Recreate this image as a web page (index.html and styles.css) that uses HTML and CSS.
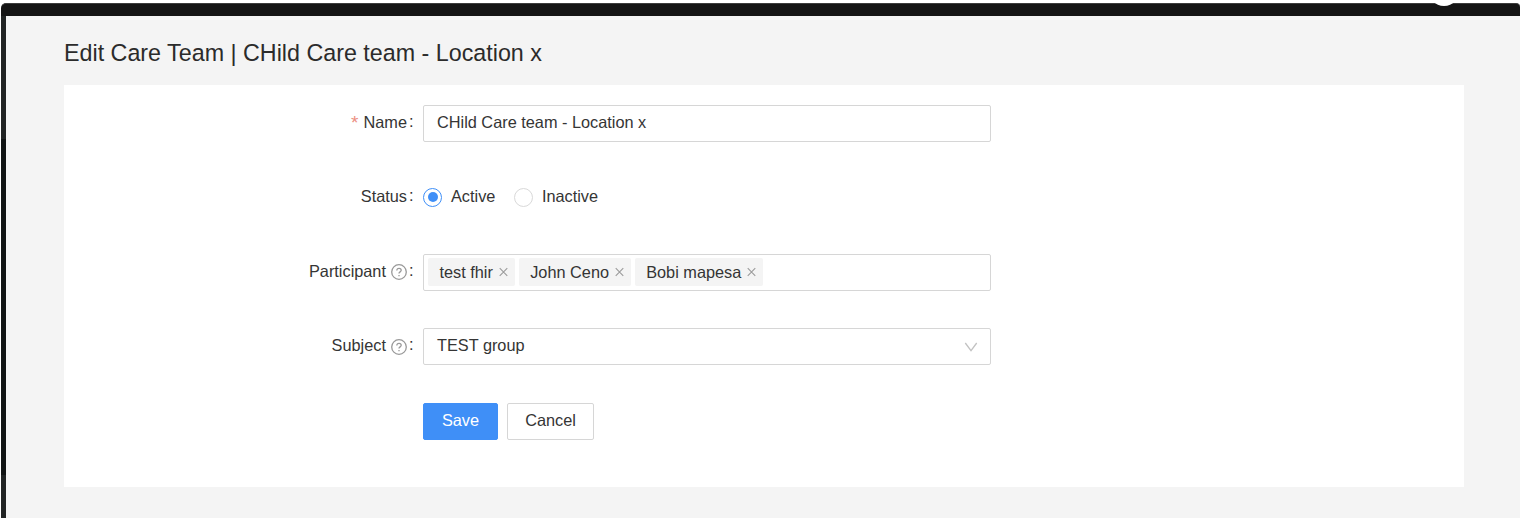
FILE: index.html
```html
<!DOCTYPE html>
<html lang="en">
<head>
<meta charset="utf-8">
<title>Edit Care Team</title>
<link rel="stylesheet" href="styles.css">
</head>
<body>
<div class="app">
  <header class="topbar"><span class="avatar"></span></header>
  <div class="layout">
    <aside class="sider"><div class="sider-menu"></div></aside>
    <main class="content">
      <h1 class="title">Edit Care Team | CHild Care team - Location x</h1>
      <form class="card">
        <div class="row">
          <label class="label"><span class="required">*</span><span>Name</span><span class="colon">:</span></label>
          <div class="box text-box">CHild Care team - Location x</div>
        </div>
        <div class="row">
          <label class="label"><span>Status</span><span class="colon">:</span></label>
          <div class="radios">
            <span class="radio checked"></span><span class="radio-text active-text">Active</span>
            <span class="radio"></span><span class="radio-text">Inactive</span>
          </div>
        </div>
        <div class="row">
          <label class="label"><span>Participant</span><svg class="help" viewBox="0 0 16 16"><circle cx="8" cy="8" r="7.3"/><path d="M5.8 6.4C5.8 5.1 6.7 4.3 8 4.3s2.2.8 2.2 2c0 1.6-2.2 1.6-2.2 3.3"/><path d="M8 10.9v1.3"/></svg><span class="colon">:</span></label>
          <div class="box tag-box">
            <span class="tag tag-first"><span>test fhir</span><svg class="close" viewBox="0 0 10 10"><path d="M.8.8l8.4 8.4M9.2.8L.8 9.2"/></svg></span>
            <span class="tag tag-second"><span>John Ceno</span><svg class="close" viewBox="0 0 10 10"><path d="M.8.8l8.4 8.4M9.2.8L.8 9.2"/></svg></span>
            <span class="tag tag-third"><span>Bobi mapesa</span><svg class="close" viewBox="0 0 10 10"><path d="M.8.8l8.4 8.4M9.2.8L.8 9.2"/></svg></span>
          </div>
        </div>
        <div class="row">
          <label class="label"><span>Subject</span><svg class="help" viewBox="0 0 16 16"><circle cx="8" cy="8" r="7.3"/><path d="M5.8 6.4C5.8 5.1 6.7 4.3 8 4.3s2.2.8 2.2 2c0 1.6-2.2 1.6-2.2 3.3"/><path d="M8 10.9v1.3"/></svg><span class="colon">:</span></label>
          <div class="box text-box select">
            <span>TEST group</span>
            <svg class="chevron" viewBox="0 0 14 10"><path d="M1.3 1L7 8.6 12.7 1"/></svg>
          </div>
        </div>
        <div class="row">
          <span class="label"></span>
          <div class="actions"><button class="btn primary" type="button">Save</button><button class="btn" type="button">Cancel</button></div>
        </div>
      </form>
    </main>
  </div>
</div>
</body>
</html>
```
FILE: styles.css
```css
* { box-sizing: border-box; }
body {
  margin: 0;
  background: #fff;
  color: #353535;
  font: 16.31px/35px "Liberation Sans", Arial, sans-serif;
}
.app {
  display: flex;
  flex-direction: column;
  height: 518px;
  padding: 3px 0 0 1px;
  overflow: hidden;
}
.topbar {
  position: relative;
  flex: none;
  height: 13px;
  background: #141414;
  border-top: 1px solid #3c3c3c;
  border-radius: 5px 4px 0 0;
}
.avatar {
  position: absolute;
  top: -30.5px;
  left: 1427px;
  width: 32px;
  height: 32px;
  border-radius: 50%;
  background: #fff;
}
.layout { display: flex; flex: 1; }
.sider {
  width: 5px;
  padding: 123px 0 43px;
  background: #212424;
}
.sider-menu { height: 100%; background: #111414; }
.content {
  flex: 1;
  padding: 18px 56px 0 58px;
  background: #f4f4f4;
}
.title {
  height: 38px;
  margin: 0 0 13px;
  font-size: 23.29px;
  font-weight: 400;
  line-height: 38px;
  color: #2b2b2b;
  white-space: nowrap;
}
.card {
  display: flex;
  flex-direction: column;
  gap: 37.4px;
  width: 1400px;
  height: 402px;
  padding-top: 20px;
  background: #fff;
}
.row { display: flex; height: 37px; }
.label {
  display: flex;
  align-items: center;
  justify-content: flex-end;
  width: 349.5px;
  height: 35px;
  margin-right: 9.5px;
}
.required { margin: 0 5px 1px 0; font-size: 19px; color: #ec8f82; }
.colon { margin: 0 0 2px 2px; }
.help {
  width: 16px;
  height: 16px;
  margin: 2px 0 0 5px;
  fill: none;
  stroke: #999;
  stroke-width: 1.3;
}
.box {
  width: 568px;
  border: 1px solid #d6d6d6;
  border-radius: 2px;
  background: #fff;
  line-height: 33px;
}
.text-box { padding: 0 13px; }
.radios { display: flex; align-items: center; height: 36px; }
.radio {
  display: flex;
  align-items: center;
  justify-content: center;
  width: 19px;
  height: 19px;
  border: 1px solid #d9d9d9;
  border-radius: 50%;
}
.checked { border-color: #3f8ff7; }
.checked::after {
  content: "";
  width: 10px;
  height: 10px;
  border-radius: 50%;
  background: #3f8ff7;
}
.radio-text { height: 36px; margin-left: 9px; }
.active-text { margin-right: 18.5px; }
.tag-box { display: flex; align-items: center; gap: 4px; padding: 0 0 1px 4.4px; }
.tag {
  display: flex;
  align-items: center;
  justify-content: space-between;
  height: 28px;
  padding: 0 7px 0 11px;
  border-radius: 2px;
  background: #f4f4f4;
  line-height: 28px;
  white-space: nowrap;
}
.tag-first { width: 86.8px; }
.tag-second { width: 112px; }
.tag-third { width: 128px; }
.close { width: 9px; height: 10px; fill: none; stroke: #9b9b9b; stroke-width: 1.2; }
.select { display: flex; justify-content: space-between; padding-right: 12px; }
.chevron { width: 14px; height: 10px; margin-top: 13px; fill: none; stroke: #c2c2c2; stroke-width: 1.3; }
.actions { display: flex; gap: 9px; }
.btn {
  width: 87px;
  height: 37px;
  padding: 0 0 2px;
  border: 1px solid #d6d6d6;
  border-radius: 2px;
  background: #fff;
  color: #353535;
  font: inherit;
  line-height: 33px;
}
.primary { width: 75px; border-color: #3f8ff7; background: #3f8ff7; color: #fff; }
```
